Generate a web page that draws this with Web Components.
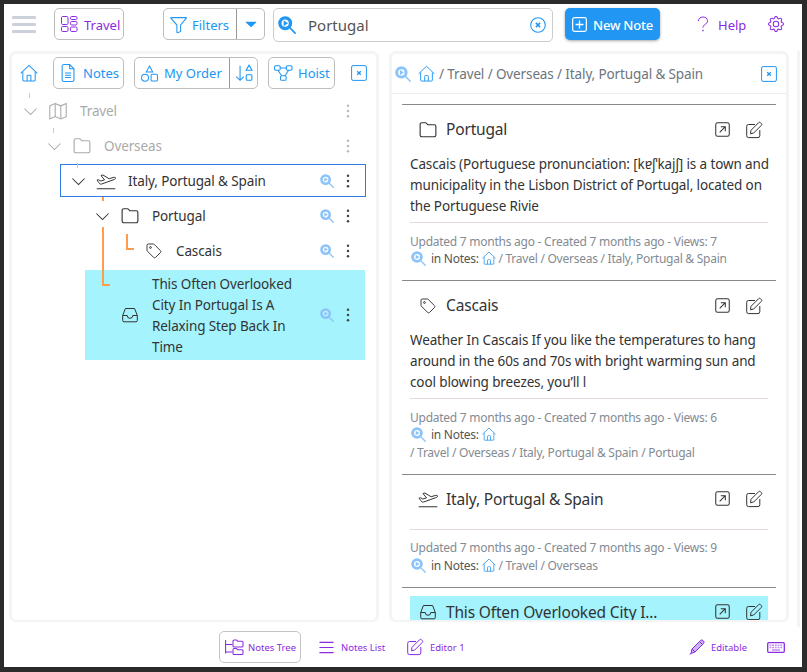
<!DOCTYPE html>
<html lang="en"><head><meta charset="utf-8"><title>Notes</title>
<style>
html,body{margin:0;padding:0;background:#2b2b2b;}
body{font-family:"Noto Sans","Open Sans",Arial,sans-serif;font-size:14px;}
</style></head><body>
<note-app></note-app>
<script>
const ICONS={
 layout:'<g fill="none" stroke="currentColor"><rect x=".5" y=".5" width="6.5" height="8" rx="1.2"/><rect x=".5" y="10.5" width="6.5" height="5" rx="1.2"/><rect x="9.5" y=".5" width="6.5" height="3" rx="1.2"/><rect x="9.500" y="5.500" width="6.500" height="3.500" rx="1.200"/><rect x="9.500" y="11" width="6.500" height="4.500" rx="1.200"/></g>',
 funnel:'<path fill="none" stroke="currentColor" d="M1 1.500h14.200a.3.3 0 0 1 .2.500L10 8.500v5.600c0 .3-.2.4-.4.6l-2.300 1c-.4.1-.8-.1-.8-.5V8.500L.8 2a.3.3 0 0 1 .2-.5z"/>',
 caret:'<path fill="currentColor" d="M1.500 5h13a.6.6 0 0 1 .4 1L8.400 12a.6.6 0 0 1-.8 0L1.100 6a.6.6 0 0 1 .4-1z"/>',
 search:'<circle cx="6.400" cy="6.400" r="4.700" fill="#fff" fill-opacity=".25" stroke="currentColor" stroke-width="3"/><path fill="currentColor" d="M5 3.900l4 2.500-4 2.500z"/><path stroke="currentColor" stroke-width="1.500" stroke-linecap="round" d="M10.800 10.800l4.400 4.400"/>',
 xcircle:'<circle cx="8" cy="8" r="7.300" fill="none" stroke="currentColor" stroke-width="1.100"/><path stroke="currentColor" stroke-width="1.500" d="M5.900 5.900l4.200 4.200M10.100 5.900l-4.200 4.200"/>',
 plus:'<rect x=".7" y=".7" width="14.600" height="14.600" rx="2" fill="none" stroke="currentColor" stroke-width="1.300"/><path stroke="currentColor" stroke-width="1.400" d="M8 3.800v8.400M3.800 8h8.400"/>',
 question:'<path fill="none" stroke="currentColor" d="M3.400 5.200C3.400 2.700 5.300 1 8 1c2.600 0 4.500 1.600 4.500 3.800 0 1.800-1 2.700-2.300 3.600C8.800 9.300 8 10.100 8 11.600"/><circle cx="8" cy="14.600" r=".8" fill="currentColor"/>',
 gear:'<path fill="currentColor" d="M8 4.754a3.246 3.246 0 1 0 0 6.492 3.246 3.246 0 0 0 0-6.492zM5.754 8a2.246 2.246 0 1 1 4.492 0 2.246 2.246 0 0 1-4.492 0z"/><path fill="currentColor" d="M9.796 1.343c-.527-1.790-3.065-1.790-3.592 0l-.094.319a.873.873 0 0 1-1.255.52l-.292-.16c-1.640-.892-3.433.902-2.540 2.541l.159.292a.873.873 0 0 1-.52 1.255l-.319.094c-1.790.527-1.790 3.065 0 3.592l.319.094a.873.873 0 0 1 .52 1.255l-.16.292c-.892 1.640.901 3.434 2.541 2.540l.292-.159a.873.873 0 0 1 1.255.52l.094.319c.527 1.790 3.065 1.790 3.592 0l.094-.319a.873.873 0 0 1 1.255-.52l.292.16c1.640.893 3.434-.902 2.540-2.541l-.159-.292a.873.873 0 0 1 .52-1.255l.319-.094c1.790-.527 1.790-3.065 0-3.592l-.319-.094a.873.873 0 0 1-.52-1.255l.16-.292c.893-1.640-.902-3.433-2.541-2.540l-.292.159a.873.873 0 0 1-1.255-.52l-.094-.319zm-2.633.283c.246-.835 1.428-.835 1.674 0l.094.319a1.873 1.873 0 0 0 2.693 1.115l.291-.16c.764-.415 1.600.42 1.184 1.185l-.159.292a1.873 1.873 0 0 0 1.116 2.692l.318.094c.835.246.835 1.428 0 1.674l-.319.094a1.873 1.873 0 0 0-1.115 2.693l.16.291c.415.764-.42 1.600-1.185 1.184l-.291-.159a1.873 1.873 0 0 0-2.693 1.116l-.094.318c-.246.835-1.428.835-1.674 0l-.094-.319a1.873 1.873 0 0 0-2.692-1.115l-.292.16c-.764.415-1.600-.42-1.184-1.185l.159-.291A1.873 1.873 0 0 0 1.945 8.930l-.319-.094c-.835-.246-.835-1.428 0-1.674l.319-.094A1.873 1.873 0 0 0 3.060 4.377l-.16-.292c-.415-.764.42-1.600 1.185-1.184l.292.159a1.873 1.873 0 0 0 2.692-1.115l.094-.319z"/>',
 home:'<g fill="none" stroke="currentColor" stroke-width=".9"><path d="M.6 8.300L8 1.200l7.400 7.100"/><path d="M2.500 7v7.300a.8.8 0 0 0 .8.8h9.400a.8.8 0 0 0 .8-.8V7"/><path d="M6.300 15v-4.300a.8.8 0 0 1 .8-.8h1.800a.8.8 0 0 1 .8.8V15"/></g>',
 file:'<g fill="none" stroke="currentColor" stroke-width=".95"><path d="M2.800 2a1.500 1.500 0 0 1 1.500-1.500h5.200L13.300 4.300V14a1.500 1.500 0 0 1-1.500 1.500H4.300A1.500 1.500 0 0 1 2.800 14z"/><path d="M9.500.5v3.800h3.800M5.300 8h5.500M5.300 10h5.500M5.300 12h5.500"/></g>',
 shapes:'<g fill="none" stroke="currentColor" stroke-width=".95"><path d="M8 1L11 6.500H5z"/><circle cx="3.800" cy="12" r="3.300"/><rect x="9.500" y="8.800" width="6" height="6.200" rx="1"/></g>',
 sort:'<g fill="none" stroke="currentColor" stroke-width=".95"><path d="M4.500 1.500V14.500M1.200 11.200l3.300 3.300 3.300-3.300"/><path d="M12.500 1l2.600 4.500H9.900z"/><rect x="10" y="9.500" width="5" height="5" rx=".8"/></g>',
 hoist:'<g fill="none" stroke="currentColor" stroke-width=".95"><rect x=".5" y="1.500" width="5" height="4" rx="1"/><rect x="11" y="1.500" width="5" height="4" rx="1"/><rect x="5.800" y="10.500" width="5" height="4" rx="1"/><path d="M5.500 3.500h5.500M3.500 5.500L6.800 10.500M13 5.500L9.800 10.500"/></g>',
 xsq:'<rect x=".6" y=".6" width="14.800" height="14.800" rx="1.500" fill="none" stroke="currentColor" stroke-width="1"/><path stroke="currentColor" stroke-width="1.300" d="M6.200 6.200l3.600 3.600M9.800 6.200l-3.600 3.600"/>',
 chev:'<path fill="none" stroke="currentColor" stroke-width="1.100" d="M1.500 4.800L8 11.300l6.500-6.500"/>',
 map:'<g fill="none" stroke="currentColor" stroke-width=".95"><path d="M.7 3.400L5.500 1.400l5 2 4.800-2V13L10.500 15l-5-2-4.800 2z"/><path d="M5.500 1.400V13M10.500 3.400V15"/></g>',
 folder:'<path fill="none" stroke="currentColor" stroke-width="1" d="M1 3a1.500 1.500 0 0 1 1.500-1.500h3.200a1.300 1.300 0 0 1 1 .5l1 1.300h5.800A1.500 1.500 0 0 1 15 4.800V12.500a1.500 1.500 0 0 1-1.500 1.500h-11A1.500 1.500 0 0 1 1 12.500z"/>',
 plane:'<g fill="none" stroke="currentColor" stroke-width=".8"><path d="M.6 14.200h14.800"/><path d="M2.300 9.300l-1.500-2 1.300-.3 1.700 1 3-.9L4 3.600l1.500-.4 5 3 3.200-1c1-.3 1.900-.1 2 .4.100.5-.5 1-1.400 1.300L4.500 10.400c-1 .3-1.700 0-2.200-1.100z"/></g>',
 tag:'<g fill="none" stroke="currentColor" stroke-width=".95"><path d="M1 2.300A1.300 1.300 0 0 1 2.300 1h5a1.300 1.300 0 0 1 .9.400l6.300 6.300a1.300 1.300 0 0 1 0 1.800l-5 5a1.300 1.300 0 0 1-1.800 0L1.400 8.200A1.300 1.300 0 0 1 1 7.300z"/><circle cx="4.500" cy="4.500" r=".9"/></g>',
 inbox:'<g fill="none" stroke="currentColor" stroke-width="1"><path d="M3.400 1.500h9.200l2.700 7v5a1.300 1.300 0 0 1-1.300 1.300H2a1.300 1.300 0 0 1-1.300-1.300v-5z"/><path d="M.7 8.500h4.500a2.800 2.800 0 0 0 5.600 0h4.500"/></g>',
 kebab:'<circle cx="8" cy="2.800" r="1.250" fill="currentColor"/><circle cx="8" cy="8" r="1.250" fill="currentColor"/><circle cx="8" cy="13.200" r="1.250" fill="currentColor"/>',
 open:'<rect x=".8" y=".8" width="14.400" height="14.400" rx="2" fill="none" stroke="currentColor" stroke-width="1.100"/><path fill="none" stroke="currentColor" stroke-width="1.100" d="M5 11L11 5M6.200 5H11v4.800"/>',
 edit:'<g fill="none" stroke="currentColor" stroke-width="1"><path d="M9 2.500H2.500A1.800 1.800 0 0 0 .7 4.300v9.500a1.800 1.800 0 0 0 1.800 1.800H12a1.800 1.800 0 0 0 1.800-1.800V8"/><path d="M5 8.300L12.600 .7a1.300 1.300 0 0 1 1.900 0l.8.800a1.300 1.300 0 0 1 0 1.900L7.700 11 4.500 11.800z"/></g>',
 list:'<path stroke="currentColor" stroke-width="1.200" d="M.5 2.500h15M.5 8h15M.5 13.500h15"/>',
 tree:'<g fill="none" stroke="currentColor" stroke-width="1.050"><path d="M.6 1v13.500M.6 5.500h6.800M.6 13h6.800"/><path d="M8 2a1 1 0 0 1 1-1h2.500l1 1.200H17a1 1 0 0 1 1 1V7a1 1 0 0 1-1 1H9a1 1 0 0 1-1-1zM8 10.500a1 1 0 0 1 1-1h2.500l1 1.200H17a1 1 0 0 1 1 1V14.500a1 1 0 0 1-1 1H9a1 1 0 0 1-1-1z"/></g>',
 pencil:'<g fill="none" stroke="currentColor" stroke-width="1"><path fill="#c9b2f5" d="M3 10L11.500 1.500a1.800 1.800 0 0 1 2.500 0l.5.500a1.800 1.800 0 0 1 0 2.500L6 13l-4 1.500z"/><path d="M10.500 2.500l3.500 3.500M3 10l3 3M.6 15.400L2 14.500"/></g>',
 kbd:'<rect x=".7" y=".7" width="16.600" height="9.600" rx="1" fill="none" stroke="currentColor" stroke-width="1.300"/><path stroke="currentColor" stroke-opacity=".55" stroke-width="1.500" stroke-dasharray="1.800 .9" d="M2.500 3.200h13M2.500 5.600h13"/><path stroke="currentColor" stroke-opacity=".55" stroke-width="1.500" d="M5 8h8"/>'
};
class UiIcon extends HTMLElement{
 connectedCallback(){
  if(this.shadowRoot)return;
  const n=this.getAttribute('name'),w=+(this.getAttribute('w')||this.getAttribute('size')||16),h=+(this.getAttribute('h')||this.getAttribute('size')||16);
  const vb=this.getAttribute('vb')||'0 0 16 16';
  this.attachShadow({mode:'open'}).innerHTML=`<style>:host{display:inline-flex;flex:none;line-height:0}svg{display:block;overflow:visible}</style><svg xmlns="http://www.w3.org/2000/svg" width="${w}" height="${h}" viewBox="${vb}">${ICONS[n]}</svg>`;
 }
}
customElements.define('ui-icon',UiIcon);

class UiBtn extends HTMLElement{
 constructor(){super();this.attachShadow({mode:'open'}).innerHTML=`<style>
 :host{display:inline-flex;box-sizing:border-box;height:32px;align-items:center;border:1px solid #bdbdbd;border-radius:5px;color:#2196f3;background:#fff;flex:none;font-size:13px;letter-spacing:0}
 </style><slot></slot>`;}
}
customElements.define('ui-btn',UiBtn);

class TopBar extends HTMLElement{
 constructor(){super();this.attachShadow({mode:'open'}).innerHTML=`<style>
 :host{display:flex;height:47px;box-sizing:border-box;padding:4px 0 0 8px;align-items:flex-start;flex:none;}
 .ham{width:24px;height:17px;margin:8px 18px 0 0;display:flex;flex-direction:column;justify-content:space-between;box-sizing:border-box;}
 .ham i{display:block;height:3px;background:#ccd0d8;border-radius:1px}
 .tr{width:70px;color:#8a2be2;padding-left:6px;gap:7px;margin-right:39px;box-sizing:border-box;}
 .tr span,.fl span,.new span,.help span{padding-top:1px}
 .fl{width:102px;margin-right:8px}
 .fl .a{display:flex;align-items:center;gap:5px;width:72px;padding-left:6px;box-sizing:border-box;height:100%;}
 .fl .b{flex:1;height:100%;border-left:1px solid #999;display:flex;align-items:center;justify-content:center}
 .s{width:280px;height:34px;box-sizing:border-box;border:1px solid #ccc;border-radius:5px;display:flex;align-items:center;padding:0 6px 0 4px;margin-right:12px;}
 .s span{flex:1;margin-left:12px;font-size:15px;color:#555;letter-spacing:0}
 .new{width:95px;height:32px;background:#2196f3;border-radius:5px;color:#fff;display:flex;align-items:center;gap:6px;padding-left:7px;box-sizing:border-box;box-shadow:0 1px 3px rgba(0,0,0,.35);font-size:13px;font-weight:500;margin-right:35px;flex:none;letter-spacing:-.2px}
 .help{display:flex;align-items:center;height:32px;gap:7px;color:#8a2be2;font-size:13px;margin-right:22px;flex:none;letter-spacing:0}
 .g{display:flex;align-items:center;height:32px;color:#8a2be2}
 </style>
 <div class="ham"><i></i><i></i><i></i></div>
 <ui-btn class="tr"><ui-icon name="layout"></ui-icon><span>Travel</span></ui-btn>
 <ui-btn class="fl"><div class="a"><ui-icon name="funnel" size="17"></ui-icon><span>Filters</span></div><div class="b"><ui-icon name="caret" size="12"></ui-icon></div></ui-btn>
 <div class="s"><ui-icon name="search" size="18" style="color:#2196f3;"></ui-icon><span>Portugal</span><ui-icon name="xcircle" size="16" style="color:#2196f3;"></ui-icon></div>
 <div class="new"><ui-icon name="plus" size="15"></ui-icon><span>New Note</span></div>
 <div class="help"><ui-icon name="question" size="16"></ui-icon><span>Help</span></div>
 <div class="g"><ui-icon name="gear" size="16"></ui-icon></div>`;}
}
customElements.define('top-bar',TopBar);

class TreeRow extends HTMLElement{
 constructor(){super();this.attachShadow({mode:'open'}).innerHTML=`<style>
 :host{display:flex;box-sizing:border-box;min-height:33px;margin:1px 0;padding-top:2px;align-items:center;color:#333;font-size:13.5px;line-height:21px;position:relative;flex:none;}
 :host([dim]){color:#aaa}
 :host([active]){outline:1px solid #2e7ce6;outline-offset:-1px;}
 :host([sel]){background:#a5f3fc;padding:2px 0;margin-top:2px;margin-right:1px}
 .c{width:36px;display:flex;justify-content:center;flex:none;}
 .i{width:20px;display:flex;justify-content:center;flex:none}
 .t{margin-left:12px;flex:1;min-width:0}
 :host([sel]) .c{width:35px}
 :host([sel]) .t{padding-top:2px}
 .ra{display:flex;align-items:center;gap:6px;padding-right:10px;flex:none;margin-left:auto}
 :host([sel]) .ra{padding-right:9px}
 .sb{color:#8cc4fa;display:flex}
 .k{color:#444;display:flex}
 :host([dim]) .k{color:#bbb}
 </style>
 <div class="c"><slot name="chev"></slot></div><div class="i"><slot name="icon"></slot></div><div class="t"><slot></slot></div>
 <div class="ra"><span class="sb" id="sb"><ui-icon name="search" size="14"></ui-icon></span><span class="k"><ui-icon name="kebab" size="16"></ui-icon></span></div>`;}
 connectedCallback(){
  if(this.hasAttribute('dim'))this.shadowRoot.getElementById('sb').style.visibility='hidden';
  const d=+(this.getAttribute('depth')||0);this.style.marginLeft=(d*24+(this.hasAttribute('sel')?1:0))+'px';
 }
}
customElements.define('tree-row',TreeRow);

class TreePane extends HTMLElement{
 constructor(){super();this.attachShadow({mode:'open'}).innerHTML=`<style>
 :host{display:flex;flex-direction:column;width:370px;box-sizing:border-box;border:3px solid #f4f4f4;border-bottom-width:2px;border-radius:7px;flex:none;background:#fff}
 .bar{display:flex;align-items:center;padding:3px 0 0 8px;height:32px;flex:none}
 .n{width:71px;gap:6px;padding-left:5px;margin-left:15px;margin-right:10px;box-sizing:border-box}
 .o{width:124px;margin-right:10px}
 .o .a{display:flex;align-items:center;gap:6px;padding-left:6px;width:94px;box-sizing:border-box;height:100%;white-space:nowrap}
 .o .b{flex:1;height:100%;border-left:1px solid #999;display:flex;align-items:center;justify-content:center}
 .h{width:67px;gap:6px;padding-left:5px;box-sizing:border-box;margin-right:16px}
 .tree{position:relative;padding:3.5px 0 0 0;margin-right:10px;display:flex;flex-direction:column;}
 .v{position:absolute;background:#ff9c4d}
 .g{position:absolute;width:1px;height:5px;background:#ccc}
 .ic{color:#2196f3}
 </style>
 <div class="bar"><ui-icon class="ic" name="home" size="18"></ui-icon>
 <ui-btn class="n"><ui-icon name="file" size="18"></ui-icon><span>Notes</span></ui-btn>
 <ui-btn class="o"><div class="a"><ui-icon name="shapes" size="17"></ui-icon><span>My Order</span></div><div class="b"><ui-icon name="sort" size="18"></ui-icon></div></ui-btn>
 <ui-btn class="h"><ui-icon name="hoist" size="18"></ui-icon><span>Hoist</span></ui-btn>
 <ui-icon class="ic" name="xsq" size="16"></ui-icon></div>
 <div class="tree"><slot></slot>
 <i class="g" style="left:17px;top:4px"></i><i class="g" style="left:41px;top:39px"></i><i class="g" style="left:65px;top:74px"></i>
 <i class="v" style="left:90px;top:108px;width:2px;height:4px"></i>
 <i class="v" style="left:90px;top:138px;width:2px;height:59px"></i>
 <i class="v" style="left:90px;top:195px;width:8px;height:2px"></i>
 <i class="v" style="left:114px;top:145px;width:2px;height:16px"></i>
 <i class="v" style="left:114px;top:159px;width:8px;height:2px"></i>
 </div>`;}
}
customElements.define('tree-pane',TreePane);

class NoteCard extends HTMLElement{
 constructor(){super();this.attachShadow({mode:'open'}).innerHTML=`<style>
 :host{display:block;border-top:1px solid #8a8a8a;padding:8px 8px 12.5px;flex:none}
 .h{display:flex;align-items:center;height:33px;padding:0 6px 0 8px;color:#333;font-size:15.5px;letter-spacing:-.17px}
 :host([sel]) .h{background:#a5f3fc}
 :host([sel]) .d,:host([sel]) .r,:host([sel]) .m{display:none}
 .ti{width:20px;display:flex;justify-content:center;flex:none}
 .tt{margin-left:8px;flex:1;white-space:nowrap;padding-bottom:1px}
 .ac{display:flex;gap:16px;color:#333;flex:none}
 .d{padding:8px 0 5px;font-size:13.5px;line-height:21px;color:#333;white-space:nowrap}
 .r{height:1px;background:#e8d5d5;}
 .m{margin-top:9.5px;font-size:12px;letter-spacing:-.25px;line-height:17.5px;color:#838b93;white-space:nowrap}
 .m ui-icon{vertical-align:-3px}
 </style>
 <div class="h"><div class="ti"><slot name="icon"></slot></div><div class="tt"><slot name="title"></slot></div><div class="ac"><ui-icon name="open" size="15"></ui-icon><ui-icon name="edit" size="16"></ui-icon></div></div>
 <div class="d"><slot name="desc"></slot></div><div class="r"></div>
 <div class="m"><div><slot name="stats"></slot></div><div><ui-icon name="search" size="15" style="color:#8cc4fa;margin-left:1px"></ui-icon> <span style="margin-left:2px;color:#555">in Notes:</span> <ui-icon name="home" size="14" style="color:#2196f3;vertical-align:-2px"></ui-icon> <slot name="path"></slot></div><slot name="path2"></slot></div>`;}
}
customElements.define('note-card',NoteCard);

class NotesPane extends HTMLElement{
 constructor(){super();this.attachShadow({mode:'open'}).innerHTML=`<style>
 :host{display:flex;flex-direction:column;width:400px;box-sizing:border-box;border:3px solid #f4f4f4;border-bottom-width:2px;border-radius:7px;flex:none;background:#fff;overflow:hidden;margin-left:10px}
 .bar{height:40px;flex:none;box-sizing:border-box;border-bottom:1px solid #eee;display:flex;align-items:center;padding:0 9px 0 3px;color:#6c757d;font-size:13.5px;}
 .bar .t{margin-left:4px;flex:1;white-space:nowrap}
 .sc{flex:1;min-height:0;overflow:hidden;padding:10px 10px 0;display:flex;flex-direction:column;}
 </style>
 <div class="bar"><ui-icon name="search" size="16" style="color:#8cc4fa;margin-right:7px"></ui-icon><ui-icon name="home" size="17" style="color:#2196f3"></ui-icon><span class="t">/ Travel / Overseas / Italy, Portugal &amp; Spain</span><ui-icon name="xsq" size="16" style="color:#2196f3"></ui-icon></div>
 <div class="sc"><slot></slot></div>`;}
}
customElements.define('notes-pane',NotesPane);

class FootBar extends HTMLElement{
 constructor(){super();this.attachShadow({mode:'open'}).innerHTML=`<style>
 :host{display:flex;height:45px;flex:none;box-sizing:border-box;padding:9px 0 0 215px;align-items:flex-start;color:#8a2be2;font-size:9.5px;letter-spacing:0}
 .it{display:flex;align-items:center;height:32px;flex:none;white-space:nowrap}
 .t{width:82px;box-sizing:border-box;border:1px solid #c4c4c4;border-radius:5px;padding-left:5px;gap:5px;margin-right:18px;}
 .l{gap:7px;width:66px;margin-right:22px;}
 .e{gap:7px;width:56px;margin-right:226px;}
 .ed{gap:6px;width:57px;margin-right:21px;}
 </style>
 <div class="it t"><ui-icon name="tree" w="18" h="16" vb="0 0 18 16"></ui-icon><span>Notes Tree</span></div>
 <div class="it l"><ui-icon name="list" size="15"></ui-icon><span>Notes List</span></div>
 <div class="it e"><ui-icon name="edit" size="16"></ui-icon><span>Editor 1</span></div>
 <div class="it ed"><ui-icon name="pencil" size="16"></ui-icon><span>Editable</span></div>
 <div class="it"><ui-icon name="kbd" w="18" h="11" vb="0 0 18 11"></ui-icon></div>`;}
}
customElements.define('foot-bar',FootBar);

const icon=(n,s)=>`<ui-icon slot="icon" name="${n}" size="${s}"></ui-icon>`;
const chev=`<ui-icon slot="chev" name="chev" size="15"></ui-icon>`;
class NoteApp extends HTMLElement{
 constructor(){super();this.attachShadow({mode:'open'}).innerHTML=`<style>
 :host{display:block;width:807px;height:672px;box-sizing:border-box;padding:4px 5px 5px 4px;font-family:"Noto Sans","Open Sans",Arial,sans-serif;letter-spacing:-.12px}
 .f{background:#fff;height:100%;display:flex;flex-direction:column;}
 .m{display:flex;flex:1;min-height:0;padding-left:5px;}
 .strip{width:3px;background:#f4f4f4;margin-left:8px;margin-bottom:-5px;flex:none}
 </style>
 <div class="f"><top-bar></top-bar>
 <div class="m">
 <tree-pane>
  <tree-row dim depth="0">${chev}${icon('map',18)}Travel</tree-row>
  <tree-row dim depth="1">${chev}${icon('folder',18)}Overseas</tree-row>
  <tree-row active depth="2">${chev}${icon('plane',20)}Italy, Portugal &amp; Spain</tree-row>
  <tree-row depth="3">${chev}${icon('folder',18)}Portugal</tree-row>
  <tree-row depth="4">${icon('tag',16)}Cascais</tree-row>
  <tree-row sel depth="3">${icon('inbox',16)}This Often Overlooked<br>City In Portugal Is A<br>Relaxing Step Back In<br>Time</tree-row>
 </tree-pane>
 <notes-pane>
  <note-card>${icon('folder',18)}<span slot="title">Portugal</span><span slot="desc">Cascais (Portuguese pronunciation: [kɐʃˈkajʃ] is a town and<br>municipality in the Lisbon District of Portugal, located on<br>the Portuguese Rivie</span><span slot="stats">Updated 7 months ago - Created 7 months ago - Views: 7</span><span slot="path">/ Travel / Overseas / Italy, Portugal &amp; Spain</span></note-card>
  <note-card>${icon('tag',16)}<span slot="title">Cascais</span><span slot="desc">Weather In Cascais If you like the temperatures to hang<br>around in the 60s and 70s with bright warming sun and<br>cool blowing breezes, you’ll l</span><span slot="stats">Updated 7 months ago - Created 7 months ago - Views: 6</span><div slot="path2">/ Travel / Overseas / Italy, Portugal &amp; Spain / Portugal</div></note-card>
  <note-card>${icon('plane',20)}<span slot="title">Italy, Portugal &amp; Spain</span><span slot="stats">Updated 7 months ago - Created 7 months ago - Views: 9</span><span slot="path">/ Travel / Overseas</span></note-card>
  <note-card sel>${icon('inbox',16)}<span slot="title">This Often Overlooked City I...</span></note-card>
 </notes-pane>
 <div class="strip"></div>
 </div>
 <foot-bar></foot-bar></div>`;}
}
customElements.define('note-app',NoteApp);
</script>
</body></html>
